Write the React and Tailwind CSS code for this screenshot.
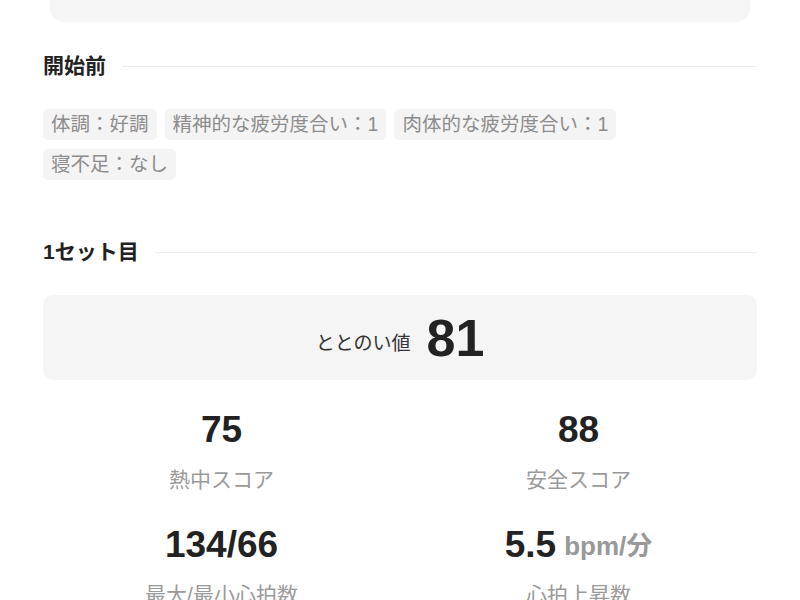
const conditions = ['体調：好調', '精神的な疲労度合い：1', '肉体的な疲労度合い：1', '寝不足：なし']

const stats = [
  { value: '75', label: '熱中スコア' },
  { value: '88', label: '安全スコア' },
  { value: '134/66', label: '最大/最小心拍数' },
  { value: '5.5', unit: 'bpm/分', label: '心拍上昇数' },
]

function SectionTitle({ children }) {
  return (
    <div className="flex items-center gap-4">
      <h2 className="text-[21px] leading-[30px] font-bold text-[#222]">{children}</h2>
      <div className="flex-1 h-px bg-[#ececec]" />
    </div>
  )
}

export default function App() {
  return (
    <div
      className="w-full h-[600px] overflow-hidden bg-white"
      style={{ fontFamily: '"Liberation Sans", "Noto Sans CJK JP", sans-serif' }}
    >
      {/* previous card, cut off at the top */}
      <div className="mx-[50px] h-[21px] rounded-b-[14px] bg-[#f5f5f5] shadow-[0_1px_2px_rgba(0,0,0,0.04)]" />

      <div className="px-[43px]">
        {/* Before start */}
        <section className="mt-[30px]">
          <SectionTitle>開始前</SectionTitle>
          <div className="mt-[28px] flex flex-wrap gap-x-2 gap-y-[9px]">
            {conditions.map((c) => (
              <span
                key={c}
                className="px-2 py-[3px] rounded-[5px] bg-[#f4f4f4] text-[#8c8c8c] text-[19.5px] leading-[25px]"
              >
                {c}
              </span>
            ))}
          </div>
        </section>

        {/* Set 1 */}
        <section className="mt-[57px]">
          <SectionTitle>1セット目</SectionTitle>
          <div className="mt-[28px] h-[85px] rounded-[10px] bg-[#f5f5f5] flex items-center justify-center gap-4">
            <span className="text-[19px] leading-[26px] text-[#333] mt-[12px]">ととのい値</span>
            <span className="text-[52px] leading-[56px] font-bold text-[#222]">81</span>
          </div>

          <div className="mt-[28px] grid grid-cols-2 gap-y-[28px]">
            {stats.map((s) => (
              <div key={s.label} className="flex flex-col items-center">
                <div className="h-[44px] flex items-center gap-2">
                  <span className="text-[37px] leading-[44px] font-bold text-[#222]">{s.value}</span>
                  {s.unit && (
                    <span className="text-[26px] leading-[44px] font-bold text-[#999] mt-[2px]">{s.unit}</span>
                  )}
                </div>
                <div className="mt-[13px] text-[21px] leading-[30px] text-[#9a9a9a]">{s.label}</div>
              </div>
            ))}
          </div>
        </section>
      </div>
    </div>
  )
}
